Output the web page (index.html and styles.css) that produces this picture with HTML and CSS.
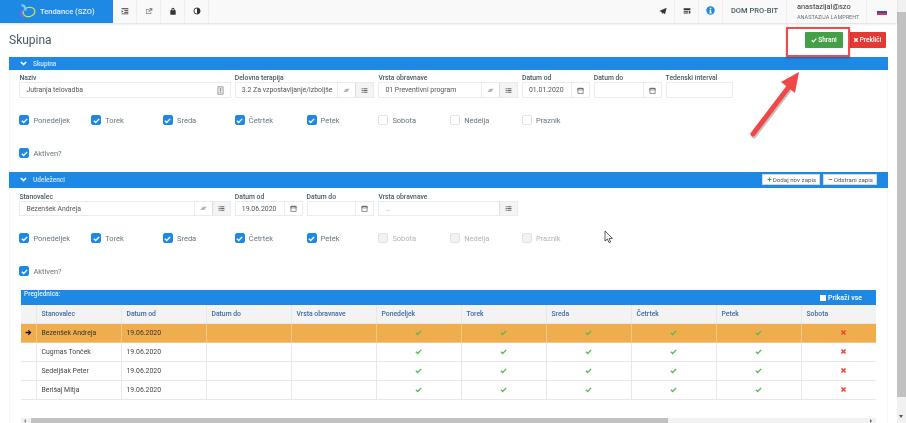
FILE: index.html
```html
<!DOCTYPE html>
<html>

<head>
  <title>Skupina</title>
  <link rel="stylesheet" href="styles.css">
</head>

<body>
  <!-- shared icons -->
  <svg class="icon-defs" width="0" height="0">
    <symbol id="i-check" viewBox="0 0 12 12"><path d="M1.5 6.5 L4.6 9.6 L10.6 3.2" fill="none" stroke="currentColor" stroke-width="2.4"/></symbol>
    <symbol id="i-times" viewBox="0 0 12 12"><path d="M2.5 2.5 L9.5 9.5 M9.5 2.5 L2.5 9.5" fill="none" stroke="currentColor" stroke-width="2.8"/></symbol>
    <symbol id="i-list" viewBox="0 0 12 12"><path d="M1 2h2v2H1zM4 2h7v2H4zM1 5h2v2H1zM4 5h7v2H4zM1 8h2v2H1zM4 8h7v2H4z" fill="currentColor"/></symbol>
    <symbol id="i-cal" viewBox="0 0 12 12"><path d="M1.5 2.5h9v8.5h-9z M1.5 2.5v2.5h9V2.5z" fill="none" stroke="currentColor" stroke-width="1.2"/><path d="M3.2 1h1.2v2H3.2zM7.6 1h1.2v2H7.6z" fill="currentColor"/></symbol>
    <symbol id="i-eraser" viewBox="0 0 12 12"><path d="M5 3h6.5L7 8.5H0.5z" fill="currentColor"/></symbol>
    <symbol id="i-chev" viewBox="0 0 12 12"><path d="M1.5 3.5 L6 8 L10.5 3.5" fill="none" stroke="currentColor" stroke-width="2.8"/></symbol>
  </svg>

  <div class="window">
    <div class="page">

      <header class="topbar">
        <div class="brand">
          <svg class="brand-logo" viewBox="0 0 18 15">
            <ellipse cx="11" cy="8" rx="6" ry="4.6" fill="none" stroke="#d7e04a" stroke-width="1.2" transform="rotate(-14 11 8)"/>
            <path d="M6 12.6 C3 12.6 1.5 10.5 4 7.5 C5 6.4 6 5.6 7.5 5" fill="none" stroke="#b455d8" stroke-width="1.2"/>
            <path d="M3.5 1.5 C6 0.5 7.5 3 7.5 6.5" fill="none" stroke="#6fd6ee" stroke-width="2.2"/>
          </svg>
          <span>Tendance (SZO)</span>
        </div>
        <div class="nav-item">
          <svg class="nav-icon" viewBox="0 0 12 12"><path d="M1 2h10v1.3H1zM5 5h6v1.3H5zM5 7.4h6v1.3H5zM1 9.8h10v1.2H1zM1 5l2.4 1.8L1 8.6z" fill="currentColor"/></svg>
        </div>
        <div class="nav-item">
          <svg class="nav-icon light" viewBox="0 0 12 12"><path d="M1.5 3h5v1H2.5v5.5h6V7h1v3.5h-8z" fill="currentColor"/><path d="M6 1.5h5v5l-1.8-1.7L6 8 4.8 6.8 8 3.4z" fill="currentColor"/></svg>
        </div>
        <div class="nav-item">
          <svg class="nav-icon" viewBox="0 0 12 12"><path d="M3.6 5V3.6a2.4 2.4 0 0 1 4.8 0V5h1.6v6.5H2V5zM5 5h2V3.6a1 1 0 0 0-2 0z" fill="currentColor"/></svg>
        </div>
        <div class="nav-item">
          <svg class="nav-icon" viewBox="0 0 12 12"><circle cx="6" cy="6" r="4.6" fill="none" stroke="currentColor" stroke-width="1.4"/><path d="M6 1.4a4.6 4.6 0 0 1 0 9.2z" fill="currentColor"/></svg>
        </div>
        <div class="topbar-fill"></div>
        <div class="nav-item">
          <svg class="nav-icon" viewBox="0 0 12 12"><path d="M11.5 1 L9 11 L6 8.5 L4.5 10.5 L4 7.5 L0.5 6z" fill="currentColor"/></svg>
        </div>
        <div class="nav-item">
          <svg class="nav-icon" viewBox="0 0 12 12"><path d="M1 2h10v3H1zM1 6h7v1.3H1zM1 8.3h7v1.3H1zM9 6h2v3.6H9z" fill="currentColor"/></svg>
        </div>
        <div class="nav-item">
          <svg class="nav-icon info" viewBox="0 0 12 12"><circle cx="6" cy="6" r="5.6" fill="#1e88e5"/><path d="M5 2.4h2v1.7H5zM4.6 5h2.4v3.6h.7V10H4.4V8.6H5V6.3h-.4z" fill="#fff"/></svg>
        </div>
        <div class="nav-item org">DOM PRO-BIT</div>
        <div class="nav-item user">
          <div class="user-name">anastazijal@szo</div>
          <div class="user-full">ANASTAZIJA LAMPREHT</div>
        </div>
        <div class="flag-box">
          <div class="flag"></div>
        </div>
      </header>

      <div class="title-row">
        <h1 class="page-title">Skupina</h1>
        <div class="actions">
          <button class="btn-save"><svg class="btn-icon"><use href="#i-check"/></svg>Shrani</button>
          <button class="btn-cancel"><svg class="btn-icon"><use href="#i-times"/></svg>Prekliči</button>
        </div>
      </div>

      <section class="panel">
        <div class="panel-head">
          <svg class="chev"><use href="#i-chev"/></svg>
          <span>Skupina</span>
        </div>
        <div class="form-grid fields-top">
          <div class="field span-3">
            <label>Naziv</label>
            <div class="input-group">
              <div class="input-text">Jutranja telovadba</div>
              <div class="addon-plain">
                <svg class="addon-icon tall" viewBox="0 0 12 12"><path d="M2.5 1h7v10h-7z" fill="#eee" stroke="#888" stroke-width="1"/><path d="M5.2 3h1.6v3.4H5.2zM5.2 7.4h1.6V9H5.2z" fill="#888"/></svg>
              </div>
            </div>
          </div>
          <div class="field span-2">
            <label>Delovna terapija</label>
            <div class="input-group">
              <div class="input-text">3.2 Za vzpostavljanje/izboljše</div>
              <div class="addon"><svg class="addon-icon pale"><use href="#i-eraser"/></svg></div>
              <div class="addon grey"><svg class="addon-icon"><use href="#i-list"/></svg></div>
            </div>
          </div>
          <div class="field span-2">
            <label>Vrsta obravnave</label>
            <div class="input-group">
              <div class="input-text">01 Preventivni program</div>
              <div class="addon"><svg class="addon-icon pale"><use href="#i-eraser"/></svg></div>
              <div class="addon grey"><svg class="addon-icon"><use href="#i-list"/></svg></div>
            </div>
          </div>
          <div class="field">
            <label>Datum od</label>
            <div class="input-group">
              <div class="input-text">01.01.2020</div>
              <div class="addon"><svg class="addon-icon"><use href="#i-cal"/></svg></div>
            </div>
          </div>
          <div class="field">
            <label>Datum do</label>
            <div class="input-group">
              <div class="input-text"></div>
              <div class="addon"><svg class="addon-icon"><use href="#i-cal"/></svg></div>
            </div>
          </div>
          <div class="field">
            <label>Tedenski interval</label>
            <div class="input-group">
              <div class="input-text"></div>
            </div>
          </div>
        </div>

        <div class="form-grid checks">
          <div class="check"><span class="box on"><svg><use href="#i-check"/></svg></span>Ponedeljek</div>
          <div class="check"><span class="box on"><svg><use href="#i-check"/></svg></span>Torek</div>
          <div class="check"><span class="box on"><svg><use href="#i-check"/></svg></span>Sreda</div>
          <div class="check"><span class="box on"><svg><use href="#i-check"/></svg></span>Četrtek</div>
          <div class="check"><span class="box on"><svg><use href="#i-check"/></svg></span>Petek</div>
          <div class="check"><span class="box"></span>Sobota</div>
          <div class="check"><span class="box"></span>Nedelja</div>
          <div class="check"><span class="box"></span>Praznik</div>
        </div>
        <div class="form-grid checks-active">
          <div class="check"><span class="box on"><svg><use href="#i-check"/></svg></span>Aktiven?</div>
        </div>

        <div class="panel-head tall">
          <svg class="chev"><use href="#i-chev"/></svg>
          <span>Udeleženci</span>
          <div class="head-actions">
            <button class="btn-mini"><span class="plus">+</span>Dodaj nov zapis</button>
            <button class="btn-mini"><span class="minus">−</span>Odstrani zapis</button>
          </div>
        </div>
        <div class="form-grid fields-second">
          <div class="field span-3">
            <label>Stanovalec</label>
            <div class="input-group">
              <div class="input-text">Bezenšek Andreja</div>
              <div class="addon"><svg class="addon-icon pale"><use href="#i-eraser"/></svg></div>
              <div class="addon grey"><svg class="addon-icon"><use href="#i-list"/></svg></div>
            </div>
          </div>
          <div class="field">
            <label>Datum od</label>
            <div class="input-group">
              <div class="input-text">19.06.2020</div>
              <div class="addon"><svg class="addon-icon"><use href="#i-cal"/></svg></div>
            </div>
          </div>
          <div class="field">
            <label>Datum do</label>
            <div class="input-group">
              <div class="input-text"></div>
              <div class="addon"><svg class="addon-icon"><use href="#i-cal"/></svg></div>
            </div>
          </div>
          <div class="field span-2">
            <label>Vrsta obravnave</label>
            <div class="input-group">
              <div class="input-text muted">...</div>
              <div class="addon grey"><svg class="addon-icon"><use href="#i-list"/></svg></div>
            </div>
          </div>
        </div>

        <div class="form-grid checks second">
          <div class="check"><span class="box on"><svg><use href="#i-check"/></svg></span>Ponedeljek</div>
          <div class="check"><span class="box on"><svg><use href="#i-check"/></svg></span>Torek</div>
          <div class="check"><span class="box on"><svg><use href="#i-check"/></svg></span>Sreda</div>
          <div class="check"><span class="box on"><svg><use href="#i-check"/></svg></span>Četrtek</div>
          <div class="check"><span class="box on"><svg><use href="#i-check"/></svg></span>Petek</div>
          <div class="check disabled"><span class="box"></span>Sobota</div>
          <div class="check disabled"><span class="box"></span>Nedelja</div>
          <div class="check disabled"><span class="box"></span>Praznik</div>
        </div>
        <div class="form-grid checks-active">
          <div class="check"><span class="box on"><svg><use href="#i-check"/></svg></span>Aktiven?</div>
        </div>

        <div class="grid-wrap">
          <div class="grid-title">
            <span>Preglednica:</span>
            <span class="show-all"><span class="show-box"></span>Prikaži vse</span>
          </div>
          <div class="grid-clip">
            <table class="grid">
              <thead>
                <tr>
                  <th class="col-arrow"></th>
                  <th>Stanovalec</th>
                  <th>Datum od</th>
                  <th>Datum do</th>
                  <th>Vrsta obravnave</th>
                  <th>Ponedeljek</th>
                  <th>Torek</th>
                  <th>Sreda</th>
                  <th>Četrtek</th>
                  <th>Petek</th>
                  <th>Sobota</th>
                </tr>
              </thead>
              <tbody>
                <tr class="selected">
                  <td class="col-arrow"><svg class="row-arrow" viewBox="0 0 12 12"><path d="M6.5 1.5 L11 6 L6.5 10.5 L5 9 L7 7.2H1V4.8h6L5 3z" fill="currentColor"/></svg></td>
                  <td>Bezenšek Andreja</td>
                  <td>19.06.2020</td>
                  <td></td>
                  <td></td>
                  <td class="mark"><svg class="yes"><use href="#i-check"/></svg></td>
                  <td class="mark"><svg class="yes"><use href="#i-check"/></svg></td>
                  <td class="mark"><svg class="yes"><use href="#i-check"/></svg></td>
                  <td class="mark"><svg class="yes"><use href="#i-check"/></svg></td>
                  <td class="mark"><svg class="yes"><use href="#i-check"/></svg></td>
                  <td class="mark"><svg class="no"><use href="#i-times"/></svg></td>
                </tr>
                <tr>
                  <td class="col-arrow"></td>
                  <td>Cugmas Tonček</td>
                  <td>19.06.2020</td>
                  <td></td>
                  <td></td>
                  <td class="mark"><svg class="yes"><use href="#i-check"/></svg></td>
                  <td class="mark"><svg class="yes"><use href="#i-check"/></svg></td>
                  <td class="mark"><svg class="yes"><use href="#i-check"/></svg></td>
                  <td class="mark"><svg class="yes"><use href="#i-check"/></svg></td>
                  <td class="mark"><svg class="yes"><use href="#i-check"/></svg></td>
                  <td class="mark"><svg class="no"><use href="#i-times"/></svg></td>
                </tr>
                <tr>
                  <td class="col-arrow"></td>
                  <td>Sedeljšak Peter</td>
                  <td>19.06.2020</td>
                  <td></td>
                  <td></td>
                  <td class="mark"><svg class="yes"><use href="#i-check"/></svg></td>
                  <td class="mark"><svg class="yes"><use href="#i-check"/></svg></td>
                  <td class="mark"><svg class="yes"><use href="#i-check"/></svg></td>
                  <td class="mark"><svg class="yes"><use href="#i-check"/></svg></td>
                  <td class="mark"><svg class="yes"><use href="#i-check"/></svg></td>
                  <td class="mark"><svg class="no"><use href="#i-times"/></svg></td>
                </tr>
                <tr>
                  <td class="col-arrow"></td>
                  <td>Berišaj Mitja</td>
                  <td>19.06.2020</td>
                  <td></td>
                  <td></td>
                  <td class="mark"><svg class="yes"><use href="#i-check"/></svg></td>
                  <td class="mark"><svg class="yes"><use href="#i-check"/></svg></td>
                  <td class="mark"><svg class="yes"><use href="#i-check"/></svg></td>
                  <td class="mark"><svg class="yes"><use href="#i-check"/></svg></td>
                  <td class="mark"><svg class="yes"><use href="#i-check"/></svg></td>
                  <td class="mark"><svg class="no"><use href="#i-times"/></svg></td>
                </tr>
              </tbody>
            </table>
          </div>
          <div class="hscroll">
            <span class="hscroll-arrow left"></span>
            <div class="hscroll-thumb"></div>
            <span class="hscroll-arrow right"></span>
          </div>
        </div>
      </section>

      <!-- annotation drawn over the screenshot -->
      <div class="note-box"></div>
      <svg class="note-arrow" viewBox="0 0 80 85">
        <path d="M13 74 L48 28" fill="none" stroke="#8a8a8a" stroke-opacity=".5" stroke-width="5" stroke-linecap="round" transform="translate(1 2)"/>
        <path d="M13 74 L48 28" fill="none" stroke="#f04848" stroke-width="5" stroke-linecap="round"/>
        <path d="M59 12 L41 22 L55 33z" fill="#f04848"/>
      </svg>

      <!-- mouse pointer caught in the screenshot -->
      <svg class="cursor" viewBox="0 0 10 14"><path d="M1 1 L1 11 L3.4 9 L5 12.6 L6.6 12 L5 8.6 L8.4 8.4z" fill="#fff" stroke="#333" stroke-width=".8"/></svg>
    </div>

    <div class="vscroll">
      <div class="vscroll-up"></div>
      <div class="vscroll-thumb"></div>
      <div class="vscroll-down"></div>
    </div>
  </div>
</body>

</html>
```

FILE: styles.css
```css
/* Page frame */
body {
  font-family: Roboto, "Liberation Sans", sans-serif;
  margin: 0;
  padding: 0;
  height: 423px;
  overflow: hidden;
  background-color: #fff;
  color: #455a64;
  position: relative;
}

.icon-defs {
  position: absolute;
}

/* the source picture is a scaled down capture, so everything is a bit soft */
.window {
  display: flex;
  height: 423px;
  filter: blur(0.35px);
}

.page {
  flex: 1;
  min-width: 0;
  position: relative;
}

/* Top bar */
.topbar {
  display: flex;
  height: 23px;
  background-color: #f9f9f9;
  box-shadow: 0 1px 2px rgba(0, 0, 0, 0.14);
  color: #333;
}

.brand {
  width: 113px;
  background-color: #1e88e5;
  display: flex;
  align-items: center;
  padding-left: 18px;
  box-sizing: border-box;
  color: #e3f1fc;
  font-size: 7.6px;
  font-weight: 500;
}

.brand-logo {
  width: 18px;
  height: 15px;
  margin-right: 4px;
}

.nav-item {
  width: 24px;
  display: flex;
  align-items: center;
  justify-content: center;
  border-right: 1px solid #eeeeee;
  box-sizing: border-box;
  padding-bottom: 2px;
}

.topbar-fill {
  flex: 1;
}

.nav-icon {
  width: 8px;
  height: 8px;
  color: #333;
}

.nav-icon.light {
  color: #888;
}

.nav-icon.info {
  width: 9px;
  height: 9px;
}

.nav-item.org {
  width: 64px;
  font-size: 7.5px;
  font-weight: 500;
  color: #455a64;
}

.nav-item.user {
  width: 80px;
  display: block;
  padding: 2px 0 0 10px;
}

.user-name {
  font-size: 7.4px;
  line-height: 9px;
  color: #333;
}

.user-full {
  font-size: 5.5px;
  line-height: 8px;
  margin-top: 2px;
  color: #67757c;
}

.flag-box {
  width: 30px;
  display: flex;
  align-items: center;
  justify-content: center;
}

.flag {
  width: 10px;
  height: 6px;
  background: linear-gradient(#f4f4fa 0 33%, #2f4fb5 33% 66%, #e53045 66%);
}

/* Title and main buttons */
.title-row {
  display: flex;
  justify-content: space-between;
  align-items: center;
  height: 34px;
  padding: 0 11px 0 9px;
}

.page-title {
  font-size: 12px;
  font-weight: 400;
  margin: 0;
  padding-bottom: 1px;
  color: #455a64;
}

.actions {
  display: flex;
  gap: 5px;
  margin-top: -1px;
}

.btn-save,
.btn-cancel {
  border: none;
  border-radius: 1px;
  height: 16px;
  width: 38px;
  padding: 0;
  display: flex;
  align-items: center;
  justify-content: center;
  color: #fff;
  font-family: inherit;
  font-size: 6.5px;
  font-weight: 500;
}

.btn-save {
  background-color: #43a047;
}

.btn-cancel {
  background-color: #e53935;
}

.btn-icon {
  width: 6px;
  height: 6px;
  margin-right: 1px;
}

/* Panel */
.panel {
  margin: 0 9px;
  width: 879px;
  box-shadow: inset 1px 0 0 #f6f6f6, inset -1px 0 0 #f6f6f6;
  height: 366px;
}

.panel-head {
  height: 13px;
  background-color: #1e88e5;
  color: #cfe6fa;
  display: flex;
  align-items: center;
  font-size: 6.5px;
  font-weight: 500;
  padding-left: 11px;
}

.panel-head.tall {
  height: 16px;
  box-sizing: border-box;
  padding-bottom: 1px;
  margin-top: 14px;
}

.chev {
  width: 7px;
  height: 7px;
  color: #fff;
  margin-right: 6px;
}

.head-actions {
  margin-left: auto;
  margin-right: 11px;
  display: flex;
  gap: 3px;
}

.btn-mini {
  height: 11px;
  padding: 0 3px 0 4px;
  border: 1px solid #d8d8d8;
  background-color: #fff;
  color: #555;
  font-family: inherit;
  font-size: 6.2px;
  display: flex;
  align-items: center;
  border-radius: 0;
}

.btn-mini .plus {
  color: #43a047;
  font-size: 8px;
  font-weight: 700;
  margin-right: 1px;
}

.btn-mini .minus {
  color: #e53935;
  font-size: 8px;
  font-weight: 700;
  margin-right: 1px;
}

/* Form grid, ten columns */
.form-grid {
  display: grid;
  grid-template-columns: repeat(10, 67.8px);
  column-gap: 4px;
  padding-left: 10.4px;
}

.fields-top {
  padding-top: 4px;
}

.fields-second {
  padding-top: 5px;
}

.fields-second .input-group {
  height: 15px;
}

.field.span-2 {
  grid-column: span 2;
}

.field.span-3 {
  grid-column: span 3;
}

.field label {
  display: block;
  font-size: 6.8px;
  font-weight: 500;
  line-height: 8px;
  color: #455a64;
}

.input-group {
  display: flex;
  height: 16px;
  border: 1px solid #e9edf2;
  box-sizing: border-box;
}

.input-text {
  flex: 1;
  min-width: 0;
  padding-left: 6px;
  font-size: 6.9px;
  line-height: 14px;
  color: #555;
  white-space: nowrap;
  overflow: hidden;
}

.input-text.muted {
  color: #aaa;
}

.addon,
.addon-plain {
  width: 18px;
  flex: none;
  display: flex;
  align-items: center;
  justify-content: center;
}

.addon {
  border-left: 1px solid #e9edf2;
  box-sizing: border-box;
}

.addon.grey {
  background-color: #f4f4f4;
  border-left-color: #dddddd;
}

.addon-icon {
  width: 7px;
  height: 7px;
  color: #666;
}

.addon-icon.tall {
  width: 9px;
  height: 9px;
}

.addon-icon.pale {
  color: #b5b5b5;
}

/* Checkboxes */
.checks {
  padding-top: 17px;
}

.checks-active {
  padding-top: 23px;
}

.check {
  display: flex;
  align-items: center;
  height: 10px;
  font-size: 7.5px;
  color: #67757c;
}

.box {
  width: 10px;
  height: 10px;
  box-sizing: border-box;
  border: 1px solid #dfe3e6;
  border-radius: 2px;
  margin-right: 4px;
  flex: none;
  display: flex;
  align-items: center;
  justify-content: center;
}

.box.on {
  background-color: #1e88e5;
  border-color: #1e88e5;
  color: #fff;
}

.box svg {
  width: 7px;
  height: 7px;
}

.check.disabled {
  color: #b0b5b8;
}

.check.disabled .box {
  background-color: #f2f2f2;
}

/* Table */
.grid-wrap {
  margin: 14px 0 0 12px;
  width: 855px;
}

.grid-title {
  height: 15px;
  background-color: #1e88e5;
  color: #e3f1fc;
  font-size: 6.5px;
  font-weight: 500;
  line-height: 8px;
  padding: 0 14px 0 3px;
  display: flex;
  justify-content: space-between;
}

.show-all {
  display: flex;
  align-items: center;
  height: 15px;
  font-size: 7px;
  color: #fff;
}

.show-box {
  width: 6px;
  height: 6px;
  background-color: #fff;
  margin-right: 2px;
}

.grid-clip {
  overflow: hidden;
}

.grid {
  border-collapse: collapse;
  table-layout: fixed;
  width: 865px;
  font-size: 6.9px;
}

.grid th,
.grid td {
  width: 85px;
  box-sizing: border-box;
  text-align: left;
  padding: 0 0 0 5px;
  border-right: 1px solid #e8e8e8;
  border-bottom: 1px solid #e8e8e8;
  white-space: nowrap;
}

.grid th {
  height: 18px;
  background-color: #f3f3f3;
  color: #3f6aa5;
  font-weight: 500;
  font-size: 6.8px;
}

.grid td {
  height: 19px;
  color: #444;
}

.grid .col-arrow {
  width: 15px;
  padding: 0;
  text-align: center;
}

.grid tr.selected td {
  background-color: #f0ad4e;
  border-color: #f3c789;
  color: #333;
}

.row-arrow {
  width: 7px;
  height: 7px;
  color: #111;
  display: block;
  margin: 0 auto;
}

.grid td.mark {
  text-align: center;
  padding: 0;
}

.mark svg {
  width: 7px;
  height: 7px;
  display: block;
  margin: 0 auto;
}

.mark .yes {
  color: #5cb85c;
}

.mark .no {
  color: #f4453c;
}

/* Fake scrollbars */
.hscroll {
  display: flex;
  align-items: center;
  height: 6px;
  margin-top: 18px;
  background-color: #f1f1f1;
}

.hscroll-thumb {
  width: 637px;
  height: 6px;
  margin-left: 10px;
  background-color: #c1c1c1;
}

.hscroll-arrow {
  position: absolute;
  width: 0;
  height: 0;
  border-top: 2px solid transparent;
  border-bottom: 2px solid transparent;
}

.hscroll-arrow.left {
  left: 24px;
  border-right: 2px solid #888;
}

.hscroll-arrow.right {
  left: 870px;
  border-left: 2px solid #666;
}

.vscroll {
  width: 9px;
  background-color: #f1f1f1;
  display: flex;
  flex-direction: column;
}

.vscroll-up {
  height: 12px;
}

.vscroll-thumb {
  height: 385px;
  background-color: #c1c1c1;
}

.vscroll-down {
  flex: 1;
  position: relative;
}

.vscroll-down::after {
  content: "";
  position: absolute;
  left: 2px;
  bottom: 5px;
  border-left: 2.5px solid transparent;
  border-right: 2.5px solid transparent;
  border-top: 3px solid #555;
}

/* Annotation on top of the page */
.note-box {
  position: absolute;
  left: 786px;
  top: 27px;
  width: 64px;
  height: 30px;
  box-sizing: border-box;
  border: 2px solid #ef4b4b;
  box-shadow: 0 1px 2px rgba(0, 0, 0, 0.3);
}

.note-arrow {
  position: absolute;
  left: 740px;
  top: 60px;
  width: 80px;
  height: 85px;
}

.cursor {
  position: absolute;
  left: 604px;
  top: 230px;
  width: 10px;
  height: 14px;
}
```
